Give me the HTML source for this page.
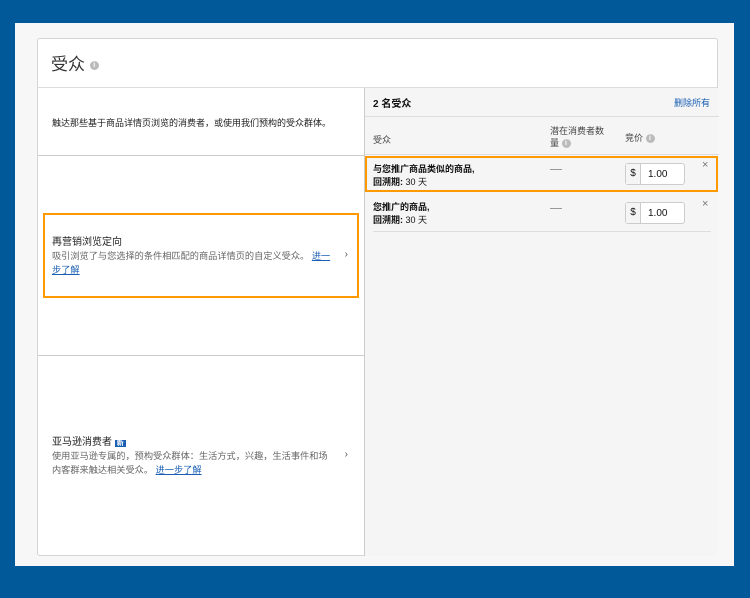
<!DOCTYPE html>
<html><head><meta charset="utf-8"><style>
*{box-sizing:border-box;margin:0;padding:0}
body{width:750px;height:598px;background:#02599a;font-family:"Liberation Sans","Noto Sans CJK SC",sans-serif;position:relative;overflow:hidden;color:#111}
.bg{position:absolute;left:15px;top:23px;width:719px;height:543px;background:#f7f7f7}
.card{position:absolute;left:37px;top:38px;width:681px;height:518px;background:#fff;border:1px solid #d5d5d5;border-radius:3px}
.hd{position:absolute;left:0;top:0;width:679px;height:49px;border-bottom:1px solid #ddd;font-size:17px;color:#333;padding:11px 0 0 13px}
.i{display:inline-block;width:9px;height:9px;border-radius:50%;background:#bbb;color:#fff;font-size:7px;text-align:center;line-height:9px;font-weight:bold;vertical-align:middle}
.left{position:absolute;left:0;top:49px;width:326px;height:468px}
.sec{position:absolute;left:0;width:326px;border-bottom:1px solid #ccc}
.right{position:absolute;left:326px;top:49px;width:354px;height:468px;background:#f5f5f5;border-left:1px solid #ccc}
.s{font-size:10px}
.d{font-size:9.2px;color:#666;line-height:14px;width:281px}
a{color:#1a5fb4;text-decoration:underline}
.arr{position:absolute;right:16px;font-size:10px;color:#555}
.inp{position:absolute;width:60px;height:22px;border:1px solid #ccc;border-radius:3px;background:#fff;font-size:10px}
.inp span{position:absolute;left:0;top:0;width:15px;height:20px;border-right:1px solid #ccc;background:#f5f5f5;text-align:center;line-height:20px}
.inp b{position:absolute;left:22px;top:5px;font-weight:normal}
.dash{position:absolute;left:185px;width:12px;border-top:1px solid #999}
</style></head><body>
<div class="bg"></div>
<div class="card">
<div class="hd">受众 <span class="i">i</span></div>
<div class="left">
<div class="sec" style="top:0;height:68px"><div style="position:absolute;left:14px;top:28px;color:#222;font-size:9px">触达那些基于商品详情页浏览的消费者，或使用我们预构的受众群体。</div></div>
<div class="sec" style="top:68px;height:200px"></div>
<div style="position:absolute;left:5px;top:125px;width:316px;height:85px;border:2px solid #f90"></div>
<div class="s" style="position:absolute;left:14px;top:145px;color:#222">再营销浏览定向</div>
<div class="d" style="position:absolute;left:14px;top:161px">吸引浏览了与您选择的条件相匹配的商品详情页的自定义受众。 <a>进一步了解</a></div>
<div class="arr" style="top:161px">›</div>
<div class="s" style="position:absolute;left:14px;top:345px;color:#222">亚马逊消费者 <span style="background:#1a5fb4;color:#fff;font-size:7px;padding:0 2px;font-weight:bold">新</span></div>
<div class="d" style="position:absolute;left:14px;top:361px">使用亚马逊专属的，预构受众群体：生活方式，兴趣，生活事件和场内客群来触达相关受众。 <a>进一步了解</a></div>
<div class="arr" style="top:361px">›</div>
</div>
<div class="right">
<div style="position:absolute;left:0;top:0;width:354px;height:29px;border-bottom:1px solid #ddd"></div>
<div class="s" style="position:absolute;left:8px;top:7px;font-weight:bold">2 名受众</div>
<div style="position:absolute;right:8px;top:8px;font-size:9px;color:#1a5fb4">删除所有</div>
<div style="position:absolute;left:0;top:29px;width:354px;height:38px;border-bottom:1px solid #ddd"></div>
<div style="position:absolute;left:8px;top:45px;font-size:9px;color:#444">受众</div>
<div style="position:absolute;left:185px;top:37px;font-size:9px;color:#444;line-height:12px">潜在消费者数<br>量 <span class="i">i</span></div>
<div style="position:absolute;left:260px;top:43px;font-size:9px;color:#444">竞价 <span class="i">i</span></div>
<div style="position:absolute;left:0;top:68px;width:353px;height:36px;border:2px solid #f90"></div>
<div style="position:absolute;left:8px;top:75px;font-size:9px;line-height:13px"><b>与您推广商品类似的商品,</b><br><b>回溯期:</b> 30 天</div>
<div class="dash" style="top:81px"></div>
<div class="inp" style="left:260px;top:75px"><span>$</span><b>1.00</b></div>
<div style="position:absolute;left:337px;top:71px;color:#777;font-size:11px">×</div>
<div style="position:absolute;left:8px;top:113px;font-size:9px;line-height:13px"><b>您推广的商品,</b><br><b>回溯期:</b> 30 天</div>
<div class="dash" style="top:120px"></div>
<div class="inp" style="left:260px;top:114px"><span>$</span><b>1.00</b></div>
<div style="position:absolute;left:337px;top:110px;color:#777;font-size:11px">×</div>
<div style="position:absolute;left:8px;top:143px;width:338px;border-bottom:1px solid #ddd"></div>
</div>
</div>
</body></html>
